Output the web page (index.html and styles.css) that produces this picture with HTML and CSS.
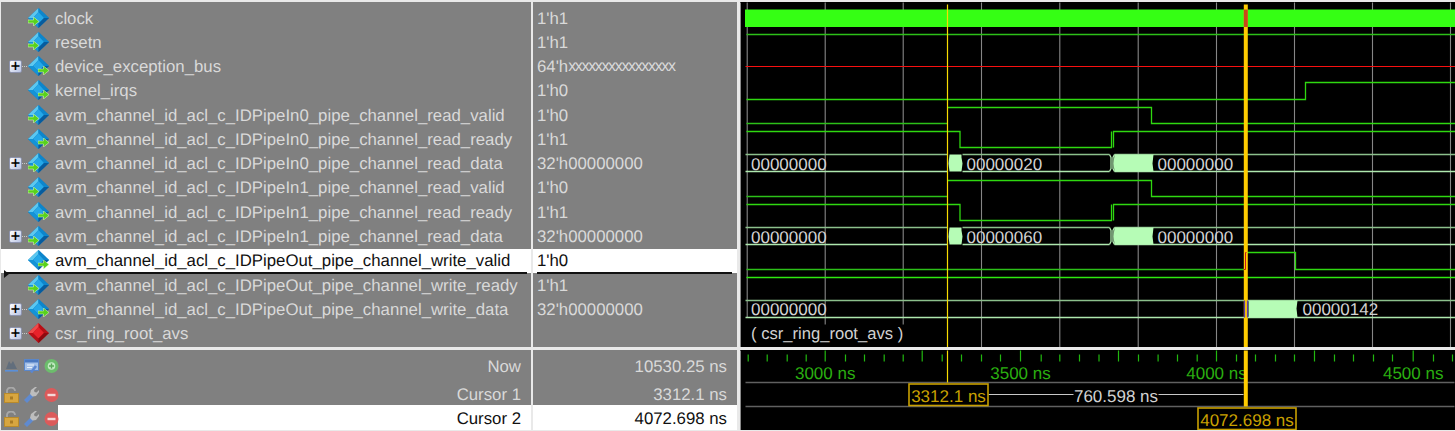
FILE: index.html
```html
<!DOCTYPE html>
<html lang="en">
<head>
<meta charset="utf-8">
<title>Wave</title>
<link rel="stylesheet" href="styles.css">
</head>
<body>
<svg class="defs" aria-hidden="true">
  <defs>
    <symbol id="dia" viewBox="0 0 21 21">
      <polygon points="10.5,0 21,10 10.5,20 0,10" fill="#0c78bf"/>
      <polygon points="10.5,0 0,10 5,10 10.5,4" fill="#5cc8f0"/>
      <polygon points="10.5,0 10.5,4 16,10 21,10" fill="#0d86cc"/>
      <polygon points="10.5,4 16,10 10.5,15.5 5,10" fill="#25a8e8"/>
      <polygon points="5,10 10.5,15.5 10.5,20 0,10" fill="#1493d6"/>
      <polygon points="16,10 10.5,15.5 10.5,20 21,10" fill="#075c9e"/>
    </symbol>
    <symbol id="dia-red" viewBox="0 0 21 21">
      <polygon points="10.5,0 21,10 10.5,20 0,10" fill="#b80f16"/>
      <polygon points="10.5,0 0,10 5,10 10.5,4" fill="#f04a4a"/>
      <polygon points="10.5,4 16,10 10.5,15.5 5,10" fill="#e8222a"/>
      <polygon points="16,10 10.5,15.5 10.5,20 21,10" fill="#8e0a10"/>
    </symbol>
    <symbol id="arr" viewBox="0 0 11 9">
      <polygon points="0,3 5.5,3 5.5,0 11,4.5 5.5,9 5.5,6 0,6" fill="#58d21c" stroke="#e6ffc8" stroke-width=".5"/>
    </symbol>
    <symbol id="lock" viewBox="0 0 15 16">
      <path d="M3 8V4a4 3.500 0 0 1 8 0" fill="none" stroke="#a8a8a8" stroke-width="1.800"/>
      <rect x=".5" y="6.500" width="14" height="9" fill="#d8a640" stroke="#b88a2c"/>
      <rect x="6" y="9.500" width="3" height="3" fill="#a97b24"/>
    </symbol>
    <symbol id="wrench" viewBox="0 0 15 16">
      <polygon points="0,13 7,6 10,9 3,16" fill="#5f8ad0"/>
      <polygon points="6,7 7,3 11,0 13,0 10,3 10.500,5 12.500,5.500 15,3 15,5 12,9 8.500,9.500" fill="#bdbdbd"/>
    </symbol>
    <symbol id="minus" viewBox="0 0 15 16">
      <circle cx="7.500" cy="8" r="7" fill="#dc5a5a"/>
      <rect x="3.500" y="6.800" width="8" height="2.400" fill="#f4d8d8"/>
    </symbol>
    <symbol id="plus" viewBox="0 0 15 16">
      <circle cx="7.500" cy="8" r="7" fill="#6cbc6c"/>
      <circle cx="7.500" cy="8" r="3.800" fill="#c0e8c0"/>
      <path d="M5 8h5M7.500 5.500v5" stroke="#5aa85a" stroke-width="1.400"/>
    </symbol>
    <symbol id="tools" viewBox="0 0 15 16">
      <polygon points="2,11 5,3 7,6 9,3 13,11" fill="#626e7c"/>
      <rect x="1" y="12" width="13" height="1.600" fill="#5a8fd8"/>
    </symbol>
    <symbol id="panel" viewBox="0 0 15 16">
      <rect x=".5" y="1.500" width="14" height="11" fill="#a4c0e8" stroke="#5a86c8"/>
      <rect x="1" y="2" width="13" height="2.500" fill="#4a78c0"/>
      <path d="M3 7h7M3 9.500h5" stroke="#e8f0fa"/>
      <path d="M12 8 7 14.500" stroke="#5a86d0" stroke-width="2.600"/>
    </symbol>
  </defs>
</svg>

<main class="app">
  <section class="col names">
    <div class="row"><span class="tree"></span><span class="icon"><svg class="dia"><use href="#dia"/></svg><svg class="arr in"><use href="#arr"/></svg></span><span class="lbl">clock</span></div>
    <div class="row"><span class="tree"></span><span class="icon"><svg class="dia"><use href="#dia"/></svg><svg class="arr in"><use href="#arr"/></svg></span><span class="lbl">resetn</span></div>
    <div class="row"><span class="tree"><b class="exp">+</b></span><span class="icon"><svg class="dia"><use href="#dia"/></svg><svg class="arr out"><use href="#arr"/></svg></span><span class="lbl">device_exception_bus</span></div>
    <div class="row"><span class="tree"></span><span class="icon"><svg class="dia"><use href="#dia"/></svg><svg class="arr out"><use href="#arr"/></svg></span><span class="lbl">kernel_irqs</span></div>
    <div class="row"><span class="tree"></span><span class="icon"><svg class="dia"><use href="#dia"/></svg><svg class="arr in"><use href="#arr"/></svg></span><span class="lbl">avm_channel_id_acl_c_IDPipeIn0_pipe_channel_read_valid</span></div>
    <div class="row"><span class="tree"></span><span class="icon"><svg class="dia"><use href="#dia"/></svg><svg class="arr out"><use href="#arr"/></svg></span><span class="lbl">avm_channel_id_acl_c_IDPipeIn0_pipe_channel_read_ready</span></div>
    <div class="row"><span class="tree"><b class="exp">+</b></span><span class="icon"><svg class="dia"><use href="#dia"/></svg><svg class="arr in"><use href="#arr"/></svg></span><span class="lbl">avm_channel_id_acl_c_IDPipeIn0_pipe_channel_read_data</span></div>
    <div class="row"><span class="tree"></span><span class="icon"><svg class="dia"><use href="#dia"/></svg><svg class="arr in"><use href="#arr"/></svg></span><span class="lbl">avm_channel_id_acl_c_IDPipeIn1_pipe_channel_read_valid</span></div>
    <div class="row"><span class="tree"></span><span class="icon"><svg class="dia"><use href="#dia"/></svg><svg class="arr out"><use href="#arr"/></svg></span><span class="lbl">avm_channel_id_acl_c_IDPipeIn1_pipe_channel_read_ready</span></div>
    <div class="row"><span class="tree"><b class="exp">+</b></span><span class="icon"><svg class="dia"><use href="#dia"/></svg><svg class="arr in"><use href="#arr"/></svg></span><span class="lbl">avm_channel_id_acl_c_IDPipeIn1_pipe_channel_read_data</span></div>
    <div class="row sel"><span class="tree"></span><span class="icon"><svg class="dia"><use href="#dia"/></svg><svg class="arr out"><use href="#arr"/></svg></span><span class="lbl">avm_channel_id_acl_c_IDPipeOut_pipe_channel_write_valid</span></div>
    <div class="row"><span class="tree"></span><span class="icon"><svg class="dia"><use href="#dia"/></svg><svg class="arr in"><use href="#arr"/></svg></span><span class="lbl">avm_channel_id_acl_c_IDPipeOut_pipe_channel_write_ready</span></div>
    <div class="row"><span class="tree"><b class="exp">+</b></span><span class="icon"><svg class="dia"><use href="#dia"/></svg><svg class="arr out"><use href="#arr"/></svg></span><span class="lbl">avm_channel_id_acl_c_IDPipeOut_pipe_channel_write_data</span></div>
    <div class="row"><span class="tree"><b class="exp">+</b></span><span class="icon"><svg class="dia"><use href="#dia-red"/></svg></span><span class="lbl">csr_ring_root_avs</span></div>
  </section>

  <section class="col values">
    <div class="row">1'h1</div>
    <div class="row">1'h1</div>
    <div class="row">64'h<span class="xs">xxxxxxxxxxxxxxxx</span></div>
    <div class="row">1'h0</div>
    <div class="row">1'h0</div>
    <div class="row">1'h1</div>
    <div class="row">32'h00000000</div>
    <div class="row">1'h0</div>
    <div class="row">1'h1</div>
    <div class="row">32'h00000000</div>
    <div class="row sel">1'h0</div>
    <div class="row">1'h1</div>
    <div class="row">32'h00000000</div>
    <div class="row"></div>
  </section>

  <section class="wavepane">
    <svg class="wave" viewBox="739.5 1.5 715 345">
      <path class="edge" d="M740 2V347"/>
      <path class="grid" d="M746.700 2V317M824.700 2V324M902.700 2V324M981 2V347M1059.300 2V347M1137.700 2V347M1216 2V347M1294 2V347M1372 2V347M1450 2V347"/>

      <rect class="clk" x="744.500" y="9" width="711" height="17.500"/>
      <path class="dim" d="M746 34H1455"/>
      <path class="red" d="M745 66H1455"/>
      <path class="g" d="M746 99H1305V82H1455"/>
      <path class="dim" d="M746 123H947"/>
      <path class="redthin" d="M947 123V107"/>
      <path class="g" d="M947 107H1151V123H1455"/>
      <path class="g" d="M746 131H959.500V147H1111V131M1113 147V131H1455"/>
      <path class="dim" d="M746 196H947"/>
      <path class="redthin" d="M947 196V180"/>
      <path class="g" d="M947 180H1151V196H1455"/>
      <path class="g" d="M746 204H959.500V220H1111V204M1113 220V204H1455"/>

      <path class="bt" d="M745 154H947M962 154H1109M1114 154H1455M745 227H947M962 227H1109M1114 227H1455"/>
      <path class="bb" d="M745 171H947M962 171H1109M1114 171H1455M745 244H947M962 244H1109M1114 244H1455"/>
      <path class="bb" d="M1109 154l1.500 3v11l-1.500 3M1114 154l-1.500 3v11l1.500 3M1109 227l1.500 3v11l-1.500 3M1114 227l-1.500 3v11l1.500 3"/>
      <polygon class="fill" points="949,154 961,154 961,157 962,163 961,171 949,171 948,163"/>
      <polygon class="fill" points="1114,154 1153,154 1152,163 1153,171 1114,171 1113,163"/>
      <polygon class="fill" points="949,227 961,227 961,230 962,236 961,244 949,244 948,236"/>
      <polygon class="fill" points="1114,227 1153,227 1152,236 1153,244 1114,244 1113,236"/>
      <path class="viol" d="M947 158V167M947 231V240"/>
      <text class="vt" x="750.500" y="169.500">00000000</text>
      <text class="vt" x="966" y="169.500">00000020</text>
      <text class="vt" x="1157" y="169.500">00000000</text>
      <text class="vt" x="750.500" y="242">00000000</text>
      <text class="vt" x="966" y="242">00000060</text>
      <text class="vt" x="1157" y="242">00000000</text>

      <path class="dim" d="M746 269H1244"/>
      <path class="g" d="M1245.500 269V252H1295V269H1455"/>
      <path class="gb" d="M746 277H1455"/>
      <path class="bt" d="M745 300H1455"/>
      <path class="bb" d="M745 317H1455"/>
      <polygon class="fill" points="1248,300 1297,300 1296,308 1297,317 1248,317"/>
      <text class="vt" x="750.500" y="314.500">00000000</text>
      <text class="vt" x="1302" y="314.500">00000142</text>
      <text class="vt narrow" x="750.500" y="338">( csr_ring_root_avs )</text>

      <path class="c1" d="M947 4V347"/>
      <path class="c2" d="M1245.300 4V347"/>
      <path class="c2red" d="M1245.300 9V26.500"/>
      <path class="redthin" d="M1246 252H1245V269H1243"/>
      <path class="viol" d="M1244 300V317M1247 300V317"/>
    </svg>

    <svg class="ruler" viewBox="739.5 349.5 715 80">
      <path class="edge" d="M740 350V430"/>
      <path class="tick" d="M747.700 354v7M766.700 354v7M786.700 354v7M805.700 354v7M824.700 350v11M845 354v7M864 354v7M883.700 354v7M902.700 354v7M921.700 350v11M941.700 354v7M961 354v7M981 354v7M1000 354v7M1020 350v11M1040.700 354v7M1059.300 354v7M1079 354v7M1098.500 354v7M1118 350v11M1138 354v7M1157.600 354v7M1177 354v7M1196.700 354v7M1216 350v11M1236 354v7M1255 354v7M1275 354v7M1294 354v7M1314 350v11M1334 354v7M1353 354v7M1373 354v7M1392 354v7M1412.700 350v11M1433 354v7M1452 354v7"/>
      <text class="tl" x="824.700" y="378">3000 ns</text>
      <text class="tl" x="1020" y="378">3500 ns</text>
      <text class="tl" x="1216" y="378">4000 ns</text>
      <text class="tl" x="1412.700" y="378">4500 ns</text>
      <path class="sep" d="M745 382H1454M745 406H1454"/>
      <path class="c1" d="M947 350V382"/>
      <path class="c2" d="M1245.300 350V406"/>
      <path class="span" d="M988 394H1073M1158 394H1243"/>
      <text class="st" x="1115.500" y="401">760.598 ns</text>
      <rect class="box" x="908.500" y="383.500" width="79" height="21.500"/>
      <text class="bxt" x="948" y="401">3312.1 ns</text>
      <rect class="box" x="1197.500" y="407.500" width="98" height="21.500"/>
      <text class="bxt" x="1246.500" y="425">4072.698 ns</text>
    </svg>
  </section>

  <section class="foot fnames">
    <div class="frow now"><span class="ficons"><svg class="fi"><use href="#tools"/></svg><svg class="fi"><use href="#panel"/></svg><svg class="fi"><use href="#plus"/></svg></span><span class="fname">Now</span></div>
    <div class="frow cur1"><span class="ficons"><svg class="fi"><use href="#lock"/></svg><svg class="fi"><use href="#wrench"/></svg><svg class="fi"><use href="#minus"/></svg></span><span class="fname">Cursor 1</span></div>
    <div class="frow cur2"><span class="ficons"><svg class="fi"><use href="#lock"/></svg><svg class="fi"><use href="#wrench"/></svg><svg class="fi"><use href="#minus"/></svg></span><span class="fname">Cursor 2</span></div>
  </section>

  <section class="foot fvalues">
    <div class="frow now">10530.25 ns</div>
    <div class="frow cur1">3312.1 ns</div>
    <div class="frow cur2">4072.698 ns</div>
  </section>
</main>
</body>
</html>
```

FILE: styles.css
```css
* { box-sizing: border-box; }
html, body { margin: 0; padding: 0; }
body {
  width: 1455px;
  height: 431px;
  overflow: hidden;
  background: #e9e9e9;
  font-family: "Liberation Sans", Arial, sans-serif;
  font-size: 16.8px;
  color: #d9d9d9;
  text-rendering: geometricPrecision;
}
.defs { position: absolute; width: 0; height: 0; }

.app {
  display: grid;
  grid-template-columns: 530px 204px 716px;
  grid-template-rows: 345px 80px;
  column-gap: 2px;
  row-gap: 3px;
  padding: 2px 0 1px 1px;
}
.wavepane {
  grid-column: 3;
  grid-row: 1 / 3;
  display: flex;
  flex-direction: column;
  gap: 3px;
  margin-left: 1px;
}
.col { background: #808080; padding-top: 4px; }
.row {
  position: relative;
  display: flex;
  align-items: center;
  height: 24.28px;
  white-space: nowrap;
}
.values .row { padding: 1px 0 0 4px; }
.lbl { margin-left: 6px; padding-top: 1px; }
.xs { letter-spacing: -1.35px; font-size: 16px; }

.sel { background: #fff; color: #111; }
.sel::after {
  content: "";
  position: absolute;
  left: 3px;
  right: 4px;
  bottom: -1px;
  height: 1.5px;
  background: #111;
}
.values .sel::after { left: 4px; right: 5px; }
.names .sel::before {
  content: "";
  position: absolute;
  left: 3px;
  bottom: -5px;
  border-left: 5px solid #111;
  border-top: 4px solid transparent;
  border-bottom: 4px solid transparent;
}

.tree {
  display: flex;
  align-items: center;
  width: 27px;
  padding-left: 8px;
  flex: none;
}
.exp {
  position: relative;
  display: flex;
  align-items: center;
  justify-content: center;
  width: 13px;
  height: 13px;
  background: linear-gradient(135deg, #fff, #b9c4e4);
  border: 1px solid #8d93ad;
  border-radius: 2px;
  color: #000;
  font-family: "DejaVu Sans", sans-serif;
  font-size: 13px;
  font-weight: 700;
  line-height: 1;
}
.exp::after {
  content: "";
  position: absolute;
  left: 12px;
  top: 5px;
  width: 7px;
  border-top: 1px dotted #c8c8c8;
}
.icon { position: relative; display: block; width: 21px; height: 21px; flex: none; }
.dia { display: block; width: 21px; height: 21px; }
.arr { position: absolute; top: 9.5px; width: 11px; height: 9px; }
.arr.in { left: 0; }
.arr.out { right: 0; }

.wave { display: block; width: 715px; height: 345px; background: #000; }
.ruler { display: block; width: 715px; height: 80px; background: #000; }
.wave path, .ruler path { fill: none; }
.edge { stroke: #8a8a8a; stroke-width: 1; }
.grid { stroke: #868686; stroke-width: 1.1; }
.clk { fill: #35ff14; }
.dim { stroke: #2cc018; stroke-width: 1.4; }
.g { stroke: #2fd810; stroke-width: 1.3; }
.gb { stroke: #2fe810; stroke-width: 1.3; }
.red { stroke: #f81010; stroke-width: 1.2; }
.redthin { stroke: #c81818; stroke-width: 1; }
.bt { stroke: #8cc08c; stroke-width: 1.3; }
.bb { stroke: #aee8ae; stroke-width: 1.3; }
.fill { fill: #b6fcb6; }
.vt { fill: #d2d2d2; font-size: 17px; }
.narrow { font-size: 16.6px; }
.c1 { stroke: #f8dc00; stroke-width: 1.2; }
.c2 { stroke: #ffcc00; stroke-width: 4; }
.c2red { stroke: #c8481a; stroke-width: 4; }
.viol { stroke: #5a3aa8; stroke-width: 1.2; }
.tick { stroke: #22b810; stroke-width: 1.2; }
.tl { fill: #2aae10; font-size: 17px; text-anchor: middle; }
.sep { stroke: #606060; stroke-width: 1.3; }
.span { stroke: #c8c8c8; stroke-width: 1.2; }
.st { fill: #d2d2d2; font-size: 17px; text-anchor: middle; }
.box { fill: #000; stroke: #c9a000; stroke-width: 1.6; }
.bxt { fill: #c9a000; font-size: 17px; text-anchor: middle; }

.foot { display: grid; grid-template-rows: 32px 23px 25px; background: #808080; }
.frow { display: flex; align-items: center; }
.ficons { display: flex; align-items: center; gap: 5px; width: 57px; padding-left: 2.5px; flex: none; }
.cur1 .ficons, .cur2 .ficons { padding-top: 2px; }
.fi { width: 15px; height: 16px; display: block; flex: none; filter: blur(.4px); }
.cur2 { color: #111; }
.fname {
  flex: 1;
  align-self: stretch;
  display: flex;
  align-items: center;
  justify-content: flex-end;
  padding: 1px 10px 0 0;
}
.cur1 .fname, .cur2 .fname { padding-top: 2px; }
.fnames .cur2 .fname { background: #fff; }
.fvalues .frow { justify-content: flex-end; padding: 1px 10px 0 0; }
.fvalues .cur1, .fvalues .cur2 { padding-top: 2px; }
.fvalues .cur2 { background: #fff; }
```
